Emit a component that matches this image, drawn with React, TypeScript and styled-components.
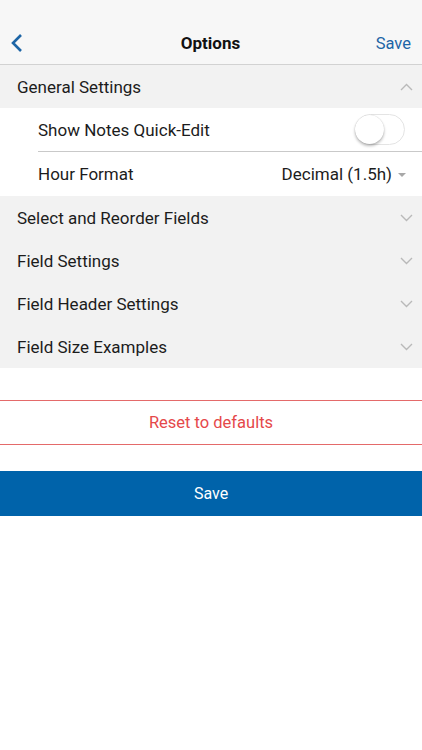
import React from 'react';
import styled, { createGlobalStyle } from 'styled-components';

const GlobalStyle = createGlobalStyle`
  html, body {
    margin: 0;
    padding: 0;
    background: #ffffff;
    font-family: Roboto, "Noto Sans", "Liberation Sans", sans-serif;
  }
`;

const sections = [
  'Select and Reorder Fields',
  'Field Settings',
  'Field Header Settings',
  'Field Size Examples',
];

const Chevron = ({ up }: { up?: boolean }) => (
  <svg width="13" height="8" viewBox="0 0 13 8">
    <path
      d={up ? 'M1 7 L6.5 1.5 L12 7' : 'M1 1 L6.5 6.5 L12 1'}
      fill="none"
      stroke="#b9b9b9"
      strokeWidth="1.4"
    />
  </svg>
);

const App = () => {
  return (
    <Page>
      <GlobalStyle />
      <Header>
        <NavBar>
          <BackButton aria-label="Back">
            <svg width="14" height="20" viewBox="0 0 14 20">
              <path d="M11 2 L3 10 L11 18" fill="none" stroke="#1d65a6" strokeWidth="2.6" />
            </svg>
          </BackButton>
          <Title>Options</Title>
          <HeaderSave>Save</HeaderSave>
        </NavBar>
      </Header>

      <SectionHeader>
        <span>General Settings</span>
        <Chevron up />
      </SectionHeader>
      <Panel>
        <SettingRow divider>
          <span>Show Notes Quick-Edit</span>
          <Toggle>
            <Knob />
          </Toggle>
        </SettingRow>
        <SettingRow>
          <span>Hour Format</span>
          <Picker>
            Decimal (1.5h)
            <Caret />
          </Picker>
        </SettingRow>
      </Panel>

      {sections.map((s) => (
        <SectionHeader key={s}>
          <span>{s}</span>
          <Chevron />
        </SectionHeader>
      ))}

      <ResetButton>Reset to defaults</ResetButton>
      <SaveButton>Save</SaveButton>
    </Page>
  );
};

export default App;

const Page = styled.div`
  width: 422px;
  min-height: 750px;
  background: #ffffff;
  display: flex;
  flex-direction: column;
`;

const Header = styled.header`
  background: #f7f7f7;
  padding-top: 20px;
  border-bottom: 1px solid #d2d2d2;
`;

const NavBar = styled.div`
  height: 44px;
  display: grid;
  grid-template-columns: 80px 1fr 80px;
  align-items: center;
  padding: 0 11px 0 10px;
`;

const BackButton = styled.div`
  display: flex;
  align-items: center;
  padding-top: 2px;
`;

const Title = styled.div`
  text-align: center;
  font-size: 17px;
  font-weight: 700;
  color: #111;
  padding-top: 2px;
`;

const HeaderSave = styled.div`
  text-align: right;
  font-size: 16.5px;
  color: #1d65a6;
  padding-top: 2px;
`;

const SectionHeader = styled.div`
  height: 43px;
  background: #f2f2f2;
  display: flex;
  align-items: center;
  justify-content: space-between;
  padding: 0 9px 0 17px;
  font-size: 17px;
  color: #1c1c1c;
`;

const Panel = styled.div`
  background: #ffffff;
  padding-left: 38px;
`;

const SettingRow = styled.div<{ divider?: boolean }>`
  height: 44px;
  display: flex;
  align-items: center;
  justify-content: space-between;
  padding-right: 16px;
  font-size: 17px;
  color: #1c1c1c;
  box-sizing: border-box;
  border-bottom: ${(p) => (p.divider ? '1px solid #c9c9c9' : 'none')};
`;

const Toggle = styled.div`
  width: 50px;
  height: 31px;
  border-radius: 16px;
  border: 1px solid #e4e4e4;
  background: #ffffff;
  box-sizing: border-box;
  position: relative;
  margin-right: 1px;
`;

const Knob = styled.div`
  position: absolute;
  left: -1px;
  top: 0px;
  width: 29px;
  height: 29px;
  border-radius: 50%;
  background: #ffffff;
  box-shadow: 0 2px 3px rgba(0, 0, 0, 0.28), 0 0 1px rgba(0, 0, 0, 0.2);
`;

const Picker = styled.div`
  display: flex;
  align-items: center;
  gap: 6px;
  color: #1c1c1c;
`;

const Caret = styled.span`
  width: 0;
  height: 0;
  border-left: 4px solid transparent;
  border-right: 4px solid transparent;
  border-top: 4px solid #a8a8a8;
  margin-top: 1px;
`;

const ResetButton = styled.div`
  margin-top: 32px;
  height: 43px;
  border-top: 1px solid #e46a6a;
  border-bottom: 1px solid #e46a6a;
  display: flex;
  align-items: center;
  justify-content: center;
  font-size: 16.5px;
  color: #e5484a;
`;

const SaveButton = styled.div`
  margin-top: 26px;
  height: 45px;
  background: #0063aa;
  display: flex;
  align-items: center;
  justify-content: center;
  font-size: 16px;
  color: #ffffff;
`;
